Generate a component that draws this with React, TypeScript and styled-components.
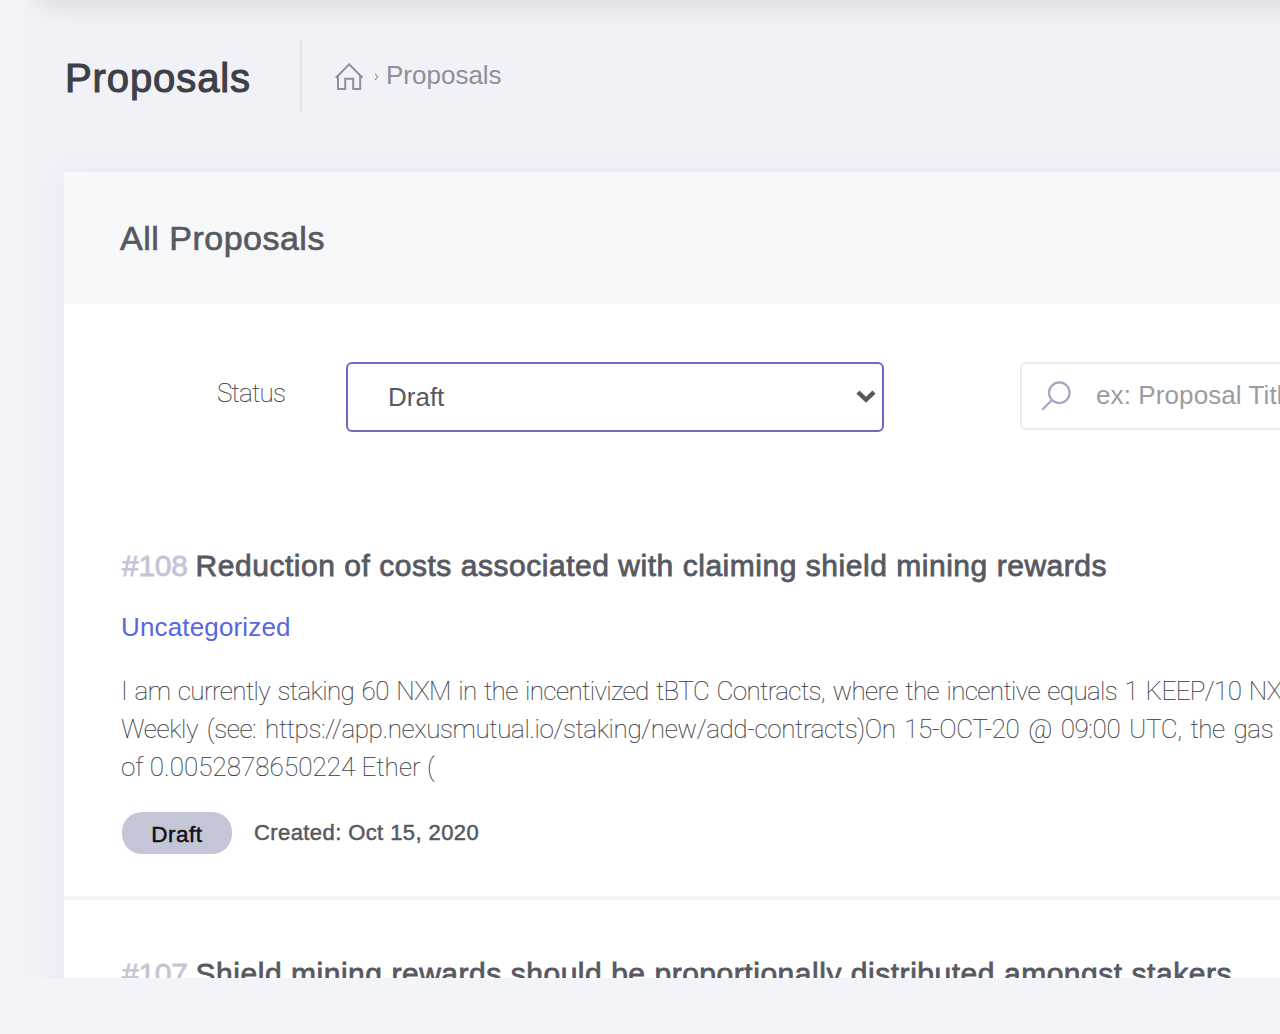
import React from 'react';
import styled, { createGlobalStyle } from 'styled-components';

const GlobalStyle = createGlobalStyle`
  * { box-sizing: border-box; }
  html, body { margin: 0; background: #f3f4fa; }
  body { font-family: 'Liberation Sans', Arial, sans-serif; overflow: hidden; }
  h1, h2, h3, p { margin: 0; font-weight: 400; }
`;

const Page = styled.div`
  height: 1034px;
  padding-left: 24px;
  overflow: hidden;
`;

const Viewport = styled.main`
  height: 978px;
  background: #f1f2f7;
  overflow: hidden;
  display: flex;
  flex-direction: column;
`;

const TopBar = styled.header`
  flex: none;
  height: 80px;
  margin: -80px -40px 0 16px;
  box-shadow: 0 0 30px rgba(0, 0, 0, 0.15);
`;

const PageHead = styled.div`
  flex: none;
  display: flex;
  height: 172px;
  padding: 40px 0 60px 41px;
`;

const PageTitle = styled.h1`
  width: 235px;
  padding-top: 2px;
  line-height: 72px;
  font-size: 40px;
  letter-spacing: 0.9px;
  color: #3f4047;
  -webkit-text-stroke: 1.1px #3f4047;
`;

const Breadcrumb = styled.nav`
  display: flex;
  height: 72px;
  padding-left: 33px;
  border-left: 2px solid #e2e4ea;
  line-height: 70px;
  font-size: 26px;
  color: #8e8f99;
`;

const HomeIcon = styled.svg`
  margin-top: 22px;
`;

const Chevron = styled.svg`
  margin: 32px 7px 0 9px;
`;

const Card = styled.section`
  flex: none;
  margin-left: 40px;
  margin-right: -60px;
  background: #fff;
  box-shadow: 0 2px 30px 2px rgba(75, 65, 200, 0.06);
`;

const CardHead = styled.h2`
  height: 132px;
  padding-left: 56px;
  background: #f7f8fa;
  line-height: 132px;
  font-size: 34px;
  letter-spacing: 0.5px;
  color: #575962;
  -webkit-text-stroke: 0.7px #575962;
`;

const Filters = styled.div`
  display: flex;
  align-items: flex-start;
  height: 188px;
  padding-top: 58px;
`;

const thin = `
  font-family: Roboto, 'Liberation Sans', sans-serif;
  font-weight: 100;
  color: #3f4148;
  -webkit-text-stroke: 0.2px #3f4148;
`;

const Label = styled.label`
  flex: none;
  width: 282px;
  padding-left: 153px;
  line-height: 62px;
  font-size: 26px;
  letter-spacing: -0.75px;
  ${thin}
`;

const Select = styled.div`
  flex: none;
  display: flex;
  justify-content: space-between;
  align-items: center;
  width: 538px;
  height: 70px;
  padding: 0 6px 0 40px;
  border: 2px solid #6d6ac4;
  border-radius: 6px;
  font-size: 26px;
  line-height: 66px;
  color: #575962;
`;

const Search = styled.div`
  flex: none;
  display: flex;
  width: 400px;
  height: 68px;
  margin-left: 136px;
  padding-left: 19px;
  border: 2px solid #ebebf2;
  border-radius: 6px;
  font-size: 26px;
  line-height: 62px;
  letter-spacing: 0.1px;
  white-space: nowrap;
  color: #9a9ca5;
`;

const SearchIcon = styled.svg`
  flex: none;
  margin: 15px 23px 0 0;
`;

const Item = styled.article`
  padding: 54px 0 42px 57px;
  border-bottom: 4px solid #f5f6fc;
`;

const ItemTitle = styled.h3`
  display: flex;
  gap: 8px;
  padding-left: 1px;
  line-height: 40px;
  font-size: 30px;
  letter-spacing: 0.53px;
  white-space: nowrap;
  color: #575962;
  -webkit-text-stroke: 0.8px;
`;

const ItemId = styled.span`
  letter-spacing: -0.3px;
  color: #c4c5d6;
`;

const Category = styled.p`
  margin-top: 23px;
  line-height: 36px;
  font-size: 26px;
  letter-spacing: 0.15px;
  color: #5867dd;
`;

const Summary = styled.p`
  margin-top: 27px;
  line-height: 38px;
  font-size: 26px;
  white-space: nowrap;
  ${thin}
`;

const SummaryLine = styled.span<{ $track: number; $gap: number }>`
  display: block;
  letter-spacing: ${(p) => p.$track}px;
  word-spacing: ${(p) => p.$gap}px;
`;

const Meta = styled.div`
  display: flex;
  align-items: center;
  gap: 22px;
  height: 42px;
  margin: 26px 0 0 1px;
`;

const Badge = styled.span`
  width: 110px;
  height: 42px;
  padding-top: 2px;
  border-radius: 20px;
  background: #c4c5d6;
  text-align: center;
  line-height: 42px;
  font-size: 22.5px;
  letter-spacing: 0.5px;
  color: #111;
  -webkit-text-stroke: 0.5px #111;
`;

const Created = styled.span`
  line-height: 42px;
  font-size: 22px;
  letter-spacing: 0.41px;
  color: #575962;
  -webkit-text-stroke: 0.5px #575962;
`;

interface TextLine {
  text: string;
  track: number;
  gap: number;
}

interface Proposal {
  id: number;
  title: string;
  category?: string;
  summary?: TextLine[];
  status?: string;
  created?: string;
}

const proposals: Proposal[] = [
  {
    id: 108,
    title: 'Reduction of costs associated with claiming shield mining rewards',
    category: 'Uncategorized',
    summary: [
      {
        text: 'I am currently staking 60 NXM in the incentivized tBTC Contracts, where the incentive equals 1 KEEP/10 NX',
        track: -0.62,
        gap: 1.8,
      },
      {
        text: 'Weekly (see: https://app.nexusmutual.io/staking/new/add-contracts)On 15-OCT-20 @ 09:00 UTC, the gas',
        track: -0.39,
        gap: 2.9,
      },
      { text: 'of 0.0052878650224 Ether (', track: 0.04, gap: 0 },
    ],
    status: 'Draft',
    created: 'Oct 15, 2020',
  },
  { id: 107, title: 'Shield mining rewards should be proportionally distributed amongst stakers' },
];

function ProposalItem({ proposal: p }: { proposal: Proposal }) {
  return (
    <Item>
      <ItemTitle>
        <ItemId>#{p.id}</ItemId>
        <span>{p.title}</span>
      </ItemTitle>
      {p.category && <Category>{p.category}</Category>}
      {p.summary && (
        <Summary>
          {p.summary.map((line) => (
            <SummaryLine key={line.text} $track={line.track} $gap={line.gap}>
              {line.text}
            </SummaryLine>
          ))}
        </Summary>
      )}
      {p.status && (
        <Meta>
          <Badge>{p.status}</Badge>
          <Created>Created: {p.created}</Created>
        </Meta>
      )}
    </Item>
  );
}

export default function App() {
  return (
    <Page>
      <GlobalStyle />
      <Viewport>
        <TopBar />
        <PageHead>
          <PageTitle>Proposals</PageTitle>
          <Breadcrumb>
            <HomeIcon width="30" height="30" viewBox="0 0 30 30" fill="none" stroke="#8e8f99" strokeWidth="2">
              <path d="M.9 15.8 14.2 2.4 27.5 15.8" />
              <path d="M3 13.8V27H10.2V16.8H18.2V27H25.2V13.8" />
            </HomeIcon>
            <Chevron width="5" height="9" viewBox="0 0 5 9" fill="none" stroke="#8e8f99" strokeWidth="1.1">
              <path d="M1 1.5 3.7 4.8 1 8.1" />
            </Chevron>
            <span>Proposals</span>
          </Breadcrumb>
        </PageHead>
        <Card>
          <CardHead>All Proposals</CardHead>
          <Filters>
            <Label>Status</Label>
            <Select>
              Draft
              <svg width="20" height="14" viewBox="0 0 20 14" fill="none" stroke="#575962" strokeWidth="4.4">
                <path d="M2 2.2 10 9.8 18 2.2" />
              </svg>
            </Select>
            <Search>
              <SearchIcon width="32" height="34" viewBox="0 0 32 34" fill="none" stroke="#a8a5c0" strokeWidth="2.2">
                <circle cx="18.3" cy="13.7" r="10.3" />
                <path d="M11 21 1.2 30.8" />
              </SearchIcon>
              ex: Proposal Titl
            </Search>
          </Filters>
          {proposals.map((p) => (
            <ProposalItem key={p.id} proposal={p} />
          ))}
        </Card>
      </Viewport>
    </Page>
  );
}
